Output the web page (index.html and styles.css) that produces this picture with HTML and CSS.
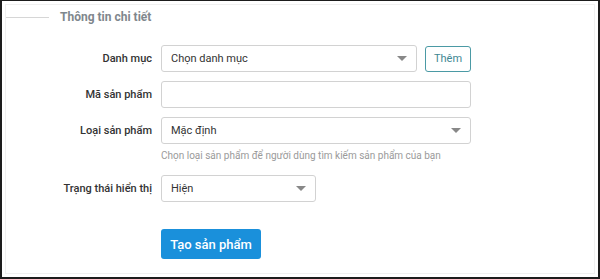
FILE: index.html
```html
<!DOCTYPE html>
<html>
<head>
  <title>Thông tin chi tiết</title>
  <link rel="stylesheet" href="styles.css">
</head>
<body>
  <div class="frame">
    <div class="panel">
      <div class="legend">
        <span class="legend-line"></span>
        <span class="legend-title">Thông tin chi tiết</span>
      </div>

      <div class="form">
        <div class="row">
          <label class="label">Danh mục</label>
          <div class="select select-cat">
            <span>Chọn danh mục</span>
            <span class="caret"></span>
          </div>
          <button class="btn-add">Thêm</button>
        </div>

        <div class="row">
          <label class="label">Mã sản phẩm</label>
          <div class="input"></div>
        </div>

        <div class="row row-tight">
          <label class="label">Loại sản phẩm</label>
          <div class="select select-wide">
            <span>Mặc định</span>
            <span class="caret"></span>
          </div>
        </div>
        <div class="help">Chọn loại sản phẩm để người dùng tìm kiếm sản phẩm của bạn</div>

        <div class="row row-status">
          <label class="label">Trạng thái hiển thị</label>
          <div class="select select-small">
            <span>Hiện</span>
            <span class="caret"></span>
          </div>
        </div>

        <div class="actions">
          <button class="btn-submit">Tạo sản phẩm</button>
        </div>
      </div>
    </div>
  </div>
</body>
</html>
```

FILE: styles.css
```css
* {
  box-sizing: border-box;
}

body {
  margin: 0;
  font-family: Roboto, "Noto Sans", Arial, sans-serif;
  color: #333;
  background: #fff;
}

.frame {
  width: 600px;
  height: 279px;
  border: 2px solid #1c1c1c;
  border-top-width: 1px;
  padding: 3px;
}

.panel {
  height: 100%;
  border: 1px solid #f0f0f0;
}

.legend {
  display: flex;
  align-items: center;
  height: 22px;
  margin-top: 1px;
}

.legend-line {
  width: 43px;
  height: 1px;
  background: #d6d6d6;
  margin-right: 11px;
}

.legend-title {
  font-size: 12px;
  font-weight: bold;
  color: #7f878d;
}

.form {
  margin-top: 17px;
}

.row {
  display: flex;
  align-items: center;
  height: 27px;
  margin-bottom: 9px;
}

.row-tight {
  margin-bottom: 0;
}

.row-status {
  margin-top: 13px;
}

.label {
  width: 146px;
  margin-right: 9px;
  text-align: right;
  font-size: 11px;
  font-weight: 500;
  color: #333;
}

.select,
.input {
  height: 27px;
  border: 1px solid #d2d2d2;
  border-radius: 3px;
  background: #fff;
  font-size: 11px;
  color: #333;
}

.select {
  display: flex;
  align-items: center;
  justify-content: space-between;
  padding: 0 9px;
}

.select-cat {
  width: 256px;
}

.select-wide,
.input {
  width: 310px;
}

.select-small {
  width: 155px;
}

.caret {
  width: 0;
  height: 0;
  border-left: 5px solid transparent;
  border-right: 5px solid transparent;
  border-top: 5px solid #888;
}

.btn-add {
  height: 26px;
  width: 46px;
  margin-left: 8px;
  padding: 0;
  border: 1px solid #4b9aa5;
  border-radius: 3px;
  background: #fff;
  color: #3f8793;
  font-family: inherit;
  font-size: 11px;
}

.help {
  margin: 5px 0 0 155px;
  font-size: 10px;
  line-height: 13px;
  color: #9a9a9a;
}

.actions {
  margin: 27px 0 0 155px;
}

.btn-submit {
  width: 100px;
  height: 30px;
  padding: 0;
  border: none;
  border-radius: 3px;
  background: #1a90db;
  color: #fff;
  font-family: inherit;
  font-size: 13px;
  font-weight: 500;
}
```
